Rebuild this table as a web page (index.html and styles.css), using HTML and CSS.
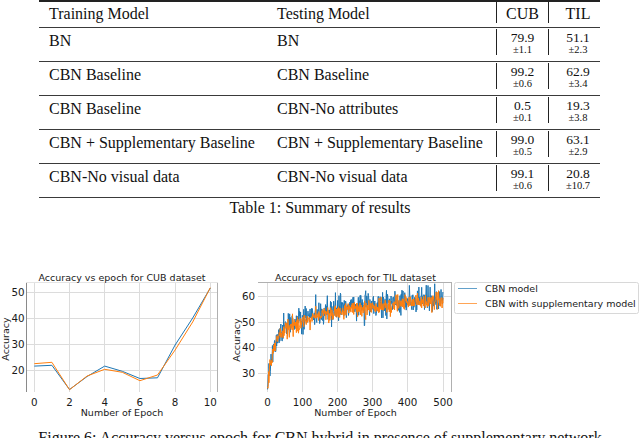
FILE: index.html
```html
<!DOCTYPE html>
<html>
<head>
<meta charset="utf-8">
<title>Summary of results</title>
<link rel="stylesheet" href="styles.css">
</head>
<body>
<div class="results">
  <div class="row head">
    <div class="c txt">Training Model</div>
    <div class="c txt">Testing Model</div>
    <div class="bar"></div>
    <div class="c h">CUB</div>
    <div class="bar"></div>
    <div class="c h til">TIL</div>
  </div>
  <div class="row">
    <div class="c txt">BN</div>
    <div class="c txt">BN</div>
    <div class="bar"></div>
    <div class="c num"><span class="v">79.9</span><span class="pm">±1.1</span></div>
    <div class="bar"></div>
    <div class="c num til"><span class="v">51.1</span><span class="pm">±2.3</span></div>
  </div>
  <div class="row">
    <div class="c txt">CBN Baseline</div>
    <div class="c txt">CBN Baseline</div>
    <div class="bar"></div>
    <div class="c num"><span class="v">99.2</span><span class="pm">±0.6</span></div>
    <div class="bar"></div>
    <div class="c num til"><span class="v">62.9</span><span class="pm">±3.4</span></div>
  </div>
  <div class="row">
    <div class="c txt">CBN Baseline</div>
    <div class="c txt">CBN-No attributes</div>
    <div class="bar"></div>
    <div class="c num"><span class="v">0.5</span><span class="pm">±0.1</span></div>
    <div class="bar"></div>
    <div class="c num til"><span class="v">19.3</span><span class="pm">±3.8</span></div>
  </div>
  <div class="row">
    <div class="c txt">CBN + Supplementary Baseline</div>
    <div class="c txt">CBN + Supplementary Baseline</div>
    <div class="bar"></div>
    <div class="c num"><span class="v">99.0</span><span class="pm">±0.5</span></div>
    <div class="bar"></div>
    <div class="c num til"><span class="v">63.1</span><span class="pm">±2.9</span></div>
  </div>
  <div class="row">
    <div class="c txt">CBN-No visual data</div>
    <div class="c txt">CBN-No visual data</div>
    <div class="bar"></div>
    <div class="c num"><span class="v">99.1</span><span class="pm">±0.6</span></div>
    <div class="bar"></div>
    <div class="c num til"><span class="v">20.8</span><span class="pm">±10.7</span></div>
  </div>
</div>
<div class="tcap">Table 1: Summary of results</div>

<svg class="fig" width="640" height="164" viewBox="0 262 640 164" xmlns="http://www.w3.org/2000/svg">
  <!-- Left plot: CUB -->
  <g class="grid">
    <line x1="34.5" y1="282" x2="34.5" y2="392"/>
    <line x1="69.5" y1="282" x2="69.5" y2="392"/>
    <line x1="104.5" y1="282" x2="104.5" y2="392"/>
    <line x1="139.5" y1="282" x2="139.5" y2="392"/>
    <line x1="175.5" y1="282" x2="175.5" y2="392"/>
    <line x1="210.5" y1="282" x2="210.5" y2="392"/>
    <line x1="26" y1="370.5" x2="218" y2="370.5"/>
    <line x1="26" y1="344.5" x2="218" y2="344.5"/>
    <line x1="26" y1="318.5" x2="218" y2="318.5"/>
    <line x1="26" y1="292.5" x2="218" y2="292.5"/>
  </g>
  <line class="spine dark" x1="26.5" y1="282" x2="26.5" y2="392"/>
  <line class="spine" x1="217.5" y1="282" x2="217.5" y2="392"/>
  <line class="spine light" x1="26" y1="282.5" x2="218" y2="282.5"/>
  <polyline class="blue" points="34.3,366.1 51.9,365.3 69.5,389.5 87.1,376.5 104.7,366.1 122.3,371.3 139.9,378.5 157.5,377.8 175.1,345 192.7,318 210.3,288"/>
  <polyline class="orange" points="34.3,363.7 51.9,362.3 69.5,389.7 87.1,376 104.7,369.3 122.3,372.3 139.9,380.7 157.5,375 175.1,350 192.7,322 210.3,287.7"/>
  <text class="ttl" x="122" y="280.5">Accuracy vs epoch for CUB dataset</text>
  <text class="yt" x="24.5" y="373.7">20</text>
  <text class="yt" x="24.5" y="347.7">30</text>
  <text class="yt" x="24.5" y="321.7">40</text>
  <text class="yt" x="24.5" y="295.7">50</text>
  <text class="xt" x="34.3" y="406">0</text>
  <text class="xt" x="69.5" y="406">2</text>
  <text class="xt" x="104.7" y="406">4</text>
  <text class="xt" x="139.9" y="406">6</text>
  <text class="xt" x="175.1" y="406">8</text>
  <text class="xt" x="210.3" y="406">10</text>
  <text class="ttl" x="122" y="415.5">Number of Epoch</text>
  <text class="ttl" x="9" y="339" transform="rotate(-90 9 339)">Accuracy</text>

  <!-- Right plot: TIL -->
  <g class="grid">
    <line x1="267.5" y1="282" x2="267.5" y2="392"/>
    <line x1="302.5" y1="282" x2="302.5" y2="392"/>
    <line x1="337.5" y1="282" x2="337.5" y2="392"/>
    <line x1="372.5" y1="282" x2="372.5" y2="392"/>
    <line x1="407.5" y1="282" x2="407.5" y2="392"/>
    <line x1="443.5" y1="282" x2="443.5" y2="392"/>
    <line x1="258" y1="373.5" x2="452" y2="373.5"/>
    <line x1="258" y1="347.5" x2="452" y2="347.5"/>
    <line x1="258" y1="322.5" x2="452" y2="322.5"/>
    <line x1="258" y1="296.5" x2="452" y2="296.5"/>
  </g>
  <line class="spine" x1="258" y1="282.5" x2="452" y2="282.5"/>
  <line class="spine" x1="451.5" y1="282" x2="451.5" y2="392"/>
  <polyline id="til-blue" class="blue" points=""/>
  <polyline id="til-orange" class="orange" points=""/>
  <text class="ttl" x="355.5" y="280.5">Accuracy vs epoch for TIL dataset</text>
  <text class="yt" x="255" y="376.7">30</text>
  <text class="yt" x="255" y="351.2">40</text>
  <text class="yt" x="255" y="325.7">50</text>
  <text class="yt" x="255" y="300.2">60</text>
  <text class="xt" x="267.5" y="406">0</text>
  <text class="xt" x="302.5" y="406">100</text>
  <text class="xt" x="337.5" y="406">200</text>
  <text class="xt" x="372.5" y="406">300</text>
  <text class="xt" x="407.5" y="406">400</text>
  <text class="xt" x="443" y="406">500</text>
  <text class="ttl" x="355.5" y="415.5">Number of Epoch</text>
  <text class="ttl" x="240" y="340" transform="rotate(-90 240 340)">Accuracy</text>

  <!-- Legend -->
  <rect class="legend" x="454.5" y="282.5" width="184" height="31" rx="2"/>
  <line class="blue soft" x1="458" y1="288.5" x2="477" y2="288.5"/>
  <line class="orange soft" x1="458" y1="303.5" x2="477" y2="303.5"/>
  <text x="485" y="292">CBN model</text>
  <text x="485" y="307">CBN with supplementary model</text>
</svg>

<div class="fcap">Figure 6: Accuracy versus epoch for CBN hybrid in presence of supplementary network</div>
<script src="script.js"></script>
</body>
</html>
```

FILE: styles.css
```css
* { box-sizing: border-box; }

html, body {
  margin: 0;
  padding: 0;
  background: #fff;
}

body {
  width: 640px;
  height: 438px;
  overflow: hidden;
  font-family: "Liberation Serif", "Times New Roman", serif;
  color: #111;
}

.results {
  margin-left: 39px;
  width: 561px;
  border-top: 2px solid #222;
}

.row {
  display: grid;
  grid-template-columns: 228px 229px 1px 51px 1px 51px;
  height: 34px;
  border-bottom: 1px solid #3a3a3a;
}

.row.head {
  height: 26px;
}

.c {
  font-size: 16px;
  line-height: 18px;
  padding-top: 4px;
  white-space: nowrap;
}

.head .c {
  padding-top: 3px;
}

.txt {
  padding-left: 10px;
}

.h {
  text-align: center;
}

.til {
  padding-left: 7px;
}

.bar {
  background: #222;
  margin: 1px 0 6px;
}

.head .bar {
  margin: 0 0 4px;
}

.num {
  display: flex;
  flex-direction: column;
  align-items: center;
  padding-top: 3px;
}

.v {
  font-size: 13.5px;
  line-height: 13px;
}

.pm {
  font-size: 10.5px;
  line-height: 11px;
}

.tcap {
  margin-top: 1px;
  text-align: center;
  font-size: 16px;
  line-height: 18px;
}

.fig {
  display: block;
  margin-top: 45px;
}

.fig text {
  font-family: "DejaVu Sans", sans-serif;
  font-size: 9.5px;
  fill: #1a1a1a;
}

.fig .xt,
.fig .yt {
  font-size: 10.3px;
}

.fig .ttl,
.fig .xt {
  text-anchor: middle;
}

.fig .yt {
  text-anchor: end;
}

.grid line {
  stroke: #dcdcdc;
  stroke-width: 1;
}

.spine {
  stroke: #b0b0b0;
  stroke-width: 1;
}

.spine.dark {
  stroke: #8a8a8a;
}

.spine.light {
  stroke: #e4e4e4;
}

.blue {
  fill: none;
  stroke: #1f77b4;
  stroke-width: 1;
  stroke-linejoin: round;
}

.orange {
  fill: none;
  stroke: #ff7f0e;
  stroke-width: 1;
  stroke-linejoin: round;
}

.soft {
  opacity: 0.7;
}

.legend {
  fill: #fff;
  stroke: #d8d8d8;
  stroke-width: 1;
}

.fcap {
  margin-top: 3px;
  text-align: center;
  font-size: 16px;
  line-height: 18px;
  white-space: nowrap;
}
```

FILE: script.js
```js
(function () {
  var seed = 20231;
  function rnd() {
    seed |= 0;
    seed = (seed + 0x6D2B79F5) | 0;
    var t = Math.imul(seed ^ (seed >>> 15), 1 | seed);
    t = (t + Math.imul(t ^ (t >>> 7), 61 | t)) ^ t;
    return ((t ^ (t >>> 14)) >>> 0) / 4294967296;
  }
  function gauss() {
    var u = rnd() || 1e-9, v = rnd();
    return Math.sqrt(-2 * Math.log(u)) * Math.cos(2 * Math.PI * v);
  }
  function mean(t) {
    return 60 - 20 * Math.exp(-t / 15) - 15 * Math.exp(-t / 200);
  }
  function px(e) { return 267.5 + e * 0.352; }
  function py(v) { return 373 - (v - 30) * 2.55; }

  var blue = [], orange = [];
  for (var e = 0; e < 500; e++) {
    var m = mean(e);
    var vb = m + 0.5 + gauss() * 2.4;
    var vo = m - 0.6 + gauss() * 1.6;
    blue.push(px(e).toFixed(2) + ',' + py(vb).toFixed(2));
    orange.push(px(e).toFixed(2) + ',' + py(vo).toFixed(2));
  }
  document.getElementById('til-blue').setAttribute('points', blue.join(' '));
  document.getElementById('til-orange').setAttribute('points', orange.join(' '));
})();
```
